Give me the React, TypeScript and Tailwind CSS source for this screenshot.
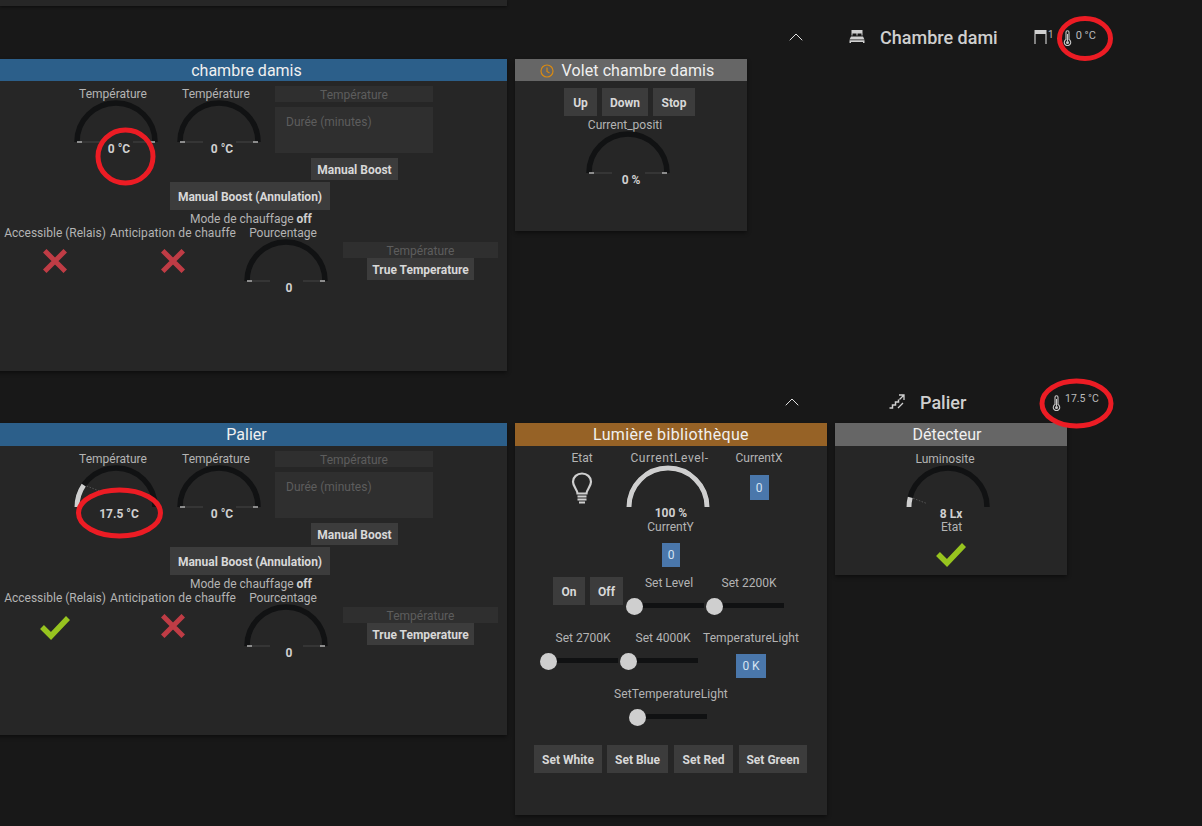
import React from "react";
import { ChevronUp } from "lucide-react";

function Gauge({ pct = 0, tone = "needle" }: { pct?: number; tone?: string }) {
  const cx = 42, cy = 41, r = 39;
  const a = Math.PI * (1 - pct / 100);
  const ex = cx + r * Math.cos(a), ey = cy - r * Math.sin(a);
  return (
    <svg width="84" height="42" viewBox="0 0 84 42" className="block mx-auto overflow-visible">
      <path d={`M${cx - r} ${cy}A${r} ${r} 0 0 1 ${cx + r} ${cy}`} fill="none" stroke="#111213" strokeWidth="5.5" />
      {pct > 0 && (
        <path d={`M${cx - r} ${cy}A${r} ${r} 0 0 1 ${ex} ${ey}`} fill="none" stroke="#cfcfcf" strokeWidth="5" />
      )}
      {pct === 0 && (
        <g>
          <path d="M3 41H26M59 41H81" stroke="#444" strokeWidth="1" />
          <path d="M3 41H8M76 41H81" stroke="#aaa" strokeWidth="1.5" />
        </g>
      )}
      {pct > 0 && pct < 100 && tone === "needle" && (
        <path d={`M${ex + 3} ${ey + 1}L${ex + 16} ${ey + 6}`} stroke="#555" strokeWidth="1" strokeDasharray="1.5 1.5" />
      )}
    </svg>
  );
}

function GaugeWidget({ label, value, pct = 0 }: { label: string; value: string; pct?: number }) {
  return (
    <div className="w-[103px] shrink-0 flex flex-col">
      <div className="h-[14px] leading-[14px] text-[12px] text-[#b4b4b4] text-center pr-[5px] whitespace-nowrap">{label}</div>
      <Gauge pct={pct} />
      <div className="-mt-[1px] h-[14px] leading-[14px] text-[12px] font-bold text-[#d0d0d0] text-center pl-[7px]">{value}</div>
    </div>
  );
}

function Btn({ children, w, h = 28, className = "" }: { children: React.ReactNode; w: string; h?: number; className?: string }) {
  return (
    <div
      className={`${w} ${h === 22 ? "h-[22px]" : "h-[28px]"} ${className} shrink-0 bg-[#3c3c3c] pt-[1px] text-[12px] font-bold text-[#d8d8d8] flex items-center justify-center whitespace-nowrap`}
    >
      {children}
    </div>
  );
}

function Cross() {
  return (
    <svg width="24" height="24" viewBox="0 0 24 24" className="block mx-auto">
      <path d="M3.500 3.500L20.500 20.500M20.500 3.500L3.500 20.500" stroke="#bf3c45" strokeWidth="5" strokeLinecap="square" />
    </svg>
  );
}

function Check({ className = "" }: { className?: string }) {
  return (
    <svg width="32" height="26" viewBox="0 0 32 26" className={`block mx-auto ${className}`}>
      <path d="M3 13L12 22L29 4" fill="none" stroke="#97c41f" strokeWidth="5.5" />
    </svg>
  );
}

function Thermo({ className = "" }: { className?: string }) {
  return (
    <svg width="9" height="16" viewBox="0 0 9 16" className={`block shrink-0 ${className}`}>
      <path d="M3 2.200a1.500 1.500 0 0 1 3 0V9.600a3.200 3.200 0 1 1-3 0Z" fill="none" stroke="#c8c8c8" strokeWidth="1.100" />
      <circle cx="4.500" cy="12.400" r="1.500" fill="#c8c8c8" />
      <path d="M4.500 4V11" stroke="#c8c8c8" strokeWidth="1" />
    </svg>
  );
}

function Bulb() {
  return (
    <svg width="22" height="32" viewBox="0 0 22 32" className="block mx-auto mt-[7px]">
      <path
        d="M6.500 21.500C6.300 17.500 2 14.500 2 9.800 2 5 6 1.500 11 1.500S20 5 20 9.800C20 14.500 15.700 17.500 15.500 21.500Z"
        fill="none"
        stroke="#cfcfcf"
        strokeWidth="2.200"
      />
      <path d="M6.500 24.500H15.500M6.500 27.500H15.500M8 30.500H14" stroke="#cfcfcf" strokeWidth="2.200" />
    </svg>
  );
}

function Slider({ label, labelClass = "pl-[8px]" }: { label: string; labelClass?: string }) {
  return (
    <div className="w-[78px] shrink-0 flex flex-col">
      <div className={`h-[14px] leading-[14px] text-[12px] text-[#b4b4b4] text-center whitespace-nowrap ${labelClass}`}>{label}</div>
      <div className="mt-[13px] h-[5px] bg-[#101112] flex items-center">
        <div className="w-[17px] h-[17px] mt-[2px] rounded-full bg-[#cfcfcf] shrink-0" />
      </div>
    </div>
  );
}

function Card({ title, color, width, height, headH = "h-[22px]", headClass = "", icon, children }: {
  title: string; color: string; width: string; height: string; headH?: string; headClass?: string; icon?: React.ReactNode; children: React.ReactNode;
}) {
  return (
    <div className={`${width} ${height} shrink-0 bg-[#262626] shadow-[0_2px_4px_rgba(0,0,0,0.45)] flex flex-col`}>
      <div className={`${headH} ${color} ${headClass} shrink-0 flex items-center justify-center gap-[8px] pt-[1px] text-[16px] leading-none text-[#f0f0f0]`}>
        {icon}
        <span>{title}</span>
      </div>
      {children}
    </div>
  );
}

function HeatingBody({ accessibleOk, value, pct }: { accessibleOk: boolean; value: string; pct: number }) {
  return (
    <div className="flex flex-col pt-[6px]">
      <div className="flex items-start pl-[78px]">
        <GaugeWidget label="Température" value={value} pct={pct} />
        <GaugeWidget label="Température" value="0 °C" />
        <div className="ml-[5px] -mt-[1px] w-[158px] flex flex-col">
          <div className="h-[16px] pt-[1px] bg-[#2f2f2f] text-[12px] leading-[16px] text-[#5d5d5d] text-center">Température</div>
          <div className="mt-[5px] h-[46px] bg-[#2f2f2f] text-[12px] leading-[16px] text-[#5d5d5d] pl-[11px] pt-[7px]">Durée (minutes)</div>
          <Btn w="w-[87px]" h={22} className="ml-[36px] mt-[5px]">Manual Boost</Btn>
        </div>
      </div>
      <Btn w="w-[160px]" className="ml-[184px] mt-[2px]">Manual Boost (Annulation)</Btn>
      <div className="ml-[204px] mt-[2px] h-[14px] leading-[14px] text-[12px] text-[#b4b4b4] whitespace-nowrap">
        Mode de chauffage <b className="text-[#d0d0d0]">off</b>
      </div>
      <div className="flex items-start pl-[18px]">
        <div className="w-[106px] shrink-0 text-[12px] leading-[14px] text-[#b4b4b4] whitespace-nowrap">
          <div className="w-[102px] text-center">Accessible (Relais)</div>
          <div className="w-[102px] mt-[9px]">{accessibleOk ? <Check /> : <Cross />}</div>
        </div>
        <div className="w-[124px] shrink-0 text-[12px] leading-[14px] text-[#b4b4b4] whitespace-nowrap">
          <div className="text-center tracking-[0.1px]">Anticipation de chauffe</div>
          <div className="mt-[9px] pl-[1px]"><Cross /></div>
        </div>
        <GaugeWidget label="Pourcentage" value="0" />
        <div className="ml-[6px] mt-[16px] w-[155px] flex flex-col">
          <div className="h-[16px] pt-[1px] bg-[#2f2f2f] text-[12px] leading-[16px] text-[#5d5d5d] text-center">Température</div>
          <Btn w="w-[107px]" h={22} className="ml-[24px]">True Temperature</Btn>
        </div>
      </div>
    </div>
  );
}

function BlueBox({ w, h, children }: { w: string; h: string; children: React.ReactNode }) {
  return <div className={`${w} ${h} bg-[#4a77ab] text-[12px] text-[#d5e3f2] flex items-center justify-center`}>{children}</div>;
}

export default function App() {
  return (
    <div className="relative w-[1202px] h-[826px] overflow-hidden bg-[#181818] font-['Roboto',sans-serif]">
      <div className="h-[6px] w-[507px] bg-[#262626] shadow-[0_1px_3px_rgba(0,0,0,0.5)]" />

      <div className="h-[53px] pt-[9px] flex items-center text-[#cfcfcf]">
        <ChevronUp className="ml-[784px] shrink-0" size={24} strokeWidth={1} color="#e0e0e0" />
        <svg width="16" height="13" viewBox="0 0 16 13" className="ml-[41px] shrink-0 -mt-[2px]">
          <path d="M2.500 0H13.500V5.500H12.500V3.500H8.500V5.500H7.500V3.500H3.500V5.500H2.500ZM2 6.500H14L15.500 9.500H.5ZM.5 10.300H15.500V13H14V12H2V13H.5Z" fill="#d0d0d0" />
        </svg>
        <div className="ml-[15px] w-[154px] pt-[1px] text-[18px] font-medium whitespace-nowrap">Chambre dami</div>
        <svg width="13" height="16" viewBox="0 0 13 16" className="shrink-0">
          <path d="M.5 1H12.500V5H.5Z" fill="#d0d0d0" />
          <path d="M1 5V15M12 5V15" stroke="#bbb" strokeWidth="1.300" fill="none" />
        </svg>
        <span className="ml-[1px] -mt-[5px] text-[10px] text-[#bbb]">1</span>
        <Thermo className="ml-[9px] mt-[2px]" />
        <span className="ml-[4px] -mt-[2px] text-[11px] text-[#bbb] whitespace-nowrap">0 °C</span>
      </div>

      <div className="flex gap-[8px] -ml-[14px]">
        <Card title="chambre damis" color="bg-[#2c5f8a]" width="w-[521px]" height="h-[312px]">
          <HeatingBody accessibleOk={false} value="0 °C" pct={0} />
        </Card>
        <Card
          title="Volet chambre damis"
          color="bg-[#666666]"
          width="w-[232px]"
          height="h-[172px]"
          headClass="pr-[8px] tracking-[0.1px]"
          icon={
            <svg width="14" height="14" viewBox="0 0 14 14">
              <circle cx="7" cy="7" r="6" fill="none" stroke="#d98a12" strokeWidth="1.200" />
              <path d="M7 3.500V7.500L9.500 9" fill="none" stroke="#d98a12" strokeWidth="1.200" />
            </svg>
          }
        >
          <div className="flex flex-col pt-[7px]">
            <div className="flex gap-[5px] pl-[49px]">
              <Btn w="w-[33px]">Up</Btn>
              <Btn w="w-[46px]">Down</Btn>
              <Btn w="w-[42px]">Stop</Btn>
            </div>
            <div className="mt-[2px] pl-[61px]">
              <GaugeWidget label="Current_positi" value="0 %" />
            </div>
          </div>
        </Card>
      </div>

      <div className="h-[52px] pt-[10px] flex items-center text-[#cfcfcf]">
        <ChevronUp className="ml-[780px] shrink-0" size={24} strokeWidth={1} color="#e0e0e0" />
        <svg width="16" height="15" viewBox="0 0 16 15" className="ml-[85px] shrink-0 -mt-[2px]">
          <path d="M.5 14H3.500V11H6.500V8H9.500V5.500" fill="none" stroke="#d0d0d0" strokeWidth="1.500" />
          <path d="M10 1H15V6M15 1L10.500 5.500M9 14L14 9" fill="none" stroke="#d0d0d0" strokeWidth="1.300" />
        </svg>
        <div className="ml-[15px] w-[132px] pt-[1px] text-[18px] font-medium whitespace-nowrap">Palier</div>
        <Thermo className="mt-[2px]" />
        <span className="ml-[4px] -mt-[7px] text-[10.500px] text-[#bbb] whitespace-nowrap">17.5 °C</span>
      </div>

      <div className="flex gap-[8px] -ml-[14px] items-start">
        <Card title="Palier" color="bg-[#2c5f8a]" width="w-[521px]" height="h-[312px]" headH="h-[23px]">
          <HeatingBody accessibleOk={true} value="17.5 °C" pct={19} />
        </Card>

        <Card title="Lumière bibliothèque" color="bg-[#966226]" width="w-[312px]" height="h-[392px]" headH="h-[23px]" headClass="tracking-[0.35px]">
          <div className="flex flex-col pt-[5px]">
            <div className="flex items-start pl-[38px]">
              <div className="w-[60px] shrink-0 text-[12px] leading-[14px] text-[#b4b4b4] text-center pr-[2px]">
                Etat
                <Bulb />
              </div>
              <div className="ml-[3px] pt-[1px]">
                <div className="w-[103px]">
                  <div className="h-[14px] leading-[14px] text-[12px] tracking-[0.6px] text-[#b4b4b4] text-center pl-[4px] -mt-[1px] whitespace-nowrap">CurrentLevel-</div>
                  <div className="pt-[1px]"><Gauge pct={100} /></div>
                  <div className="-mt-[2px] h-[14px] leading-[14px] text-[12px] font-bold text-[#d0d0d0] text-center pl-[7px]">100 %</div>
                  <div className="h-[14px] leading-[14px] text-[12px] text-[#b4b4b4] text-center pl-[6px]">CurrentY</div>
                </div>
              </div>
              <div className="ml-[10px] w-[60px] shrink-0 text-[12px] leading-[14px] text-[#b4b4b4] text-center flex flex-col items-center">
                CurrentX
                <div className="mt-[10px]"><BlueBox w="w-[19px]" h="h-[25px]">0</BlueBox></div>
              </div>
            </div>
            <div className="mt-[9px] pl-[147px]"><BlueBox w="w-[18px]" h="h-[24px]">0</BlueBox></div>
            <div className="mt-[10px] flex items-start pl-[38px]">
              <Btn w="w-[32px]">On</Btn>
              <Btn w="w-[33px]" className="ml-[5px]">Off</Btn>
              <div className="ml-[3px] -mt-[1px] flex">
                <Slider label="Set Level" />
                <div className="ml-[2px]"><Slider label="Set 2200K" /></div>
              </div>
            </div>
            <div className="mt-[23px] flex items-start pl-[25px]">
              <Slider label="Set 2700K" />
              <div className="ml-[2px]"><Slider label="Set 4000K" /></div>
              <div className="ml-[1px] w-[104px] shrink-0 text-[12px] leading-[14px] text-[#b4b4b4] text-center flex flex-col items-center">
                <span className="whitespace-nowrap tracking-[0.1px]">TemperatureLight</span>
                <div className="mt-[9px]"><BlueBox w="w-[30px]" h="h-[24px]">0 K</BlueBox></div>
              </div>
            </div>
            <div className="mt-[9px] pl-[114px]">
              <Slider label="SetTemperatureLight" labelClass="-ml-[18px] w-[120px] tracking-[0.1px]" />
            </div>
            <div className="mt-[26px] flex pl-[19px] gap-[5px]">
              <Btn w="w-[68px]">Set White</Btn>
              <Btn w="w-[61px]">Set Blue</Btn>
              <Btn w="w-[59px]" className="ml-[1px]">Set Red</Btn>
              <Btn w="w-[68px]" className="ml-[1px]">Set Green</Btn>
            </div>
          </div>
        </Card>

        <Card title="Détecteur" color="bg-[#666666]" width="w-[232px]" height="h-[152px]" headH="h-[23px]" headClass="pr-[8px]">
          <div className="flex flex-col pt-[6px]">
            <div className="pl-[61px]">
              <GaugeWidget label="Luminosite" value="8 Lx" pct={8} />
            </div>
            <div className="-mt-[1px] pl-[65px] w-[168px] text-[12px] leading-[14px] text-[#b4b4b4] text-center">Etat</div>
            <div className="pl-[63px] w-[168px] mt-[7px]"><Check /></div>
          </div>
        </Card>
      </div>

      <svg className="absolute inset-0 pointer-events-none" width="1202" height="826">
        <g fill="none" stroke="#ec1c24" strokeWidth="5">
          <ellipse cx="125.500" cy="156.500" rx="27.500" ry="26.500" />
          <ellipse cx="1085" cy="38.500" rx="25.500" ry="20" />
          <ellipse cx="1076.500" cy="403.500" rx="34.500" ry="22.500" />
          <ellipse cx="119.500" cy="513" rx="41" ry="23" />
        </g>
      </svg>
    </div>
  );
}
